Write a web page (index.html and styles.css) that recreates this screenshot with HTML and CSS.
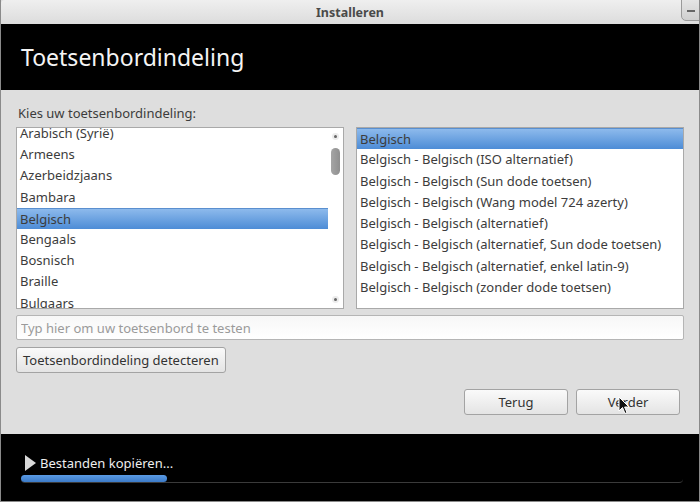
FILE: index.html
```html
<!DOCTYPE html>
<html lang="nl">
<head>
    <meta charset="UTF-8">
    <title>Installeren</title>
    <link rel="stylesheet" href="styles.css">
</head>
<body>
    <div class="window">
        <div class="titlebar">
            <span class="title">Installeren</span>
            <span class="min-btn"><span class="min-bar"></span></span>
        </div>

        <div class="header">
            <h1>Toetsenbordindeling</h1>
        </div>

        <div class="content">
            <div class="label">Kies uw toetsenbordindeling:</div>

            <div class="lists">
                <div class="list list-left">
                    <ul class="items shifted">
                        <li>Arabisch (Syrië)</li>
                        <li>Armeens</li>
                        <li>Azerbeidzjaans</li>
                        <li>Bambara</li>
                        <li class="selected">Belgisch</li>
                        <li>Bengaals</li>
                        <li>Bosnisch</li>
                        <li>Braille</li>
                        <li>Bulgaars</li>
                    </ul>
                    <div class="scrollbar">
                        <span class="arrow"></span>
                        <span class="thumb"></span>
                        <span class="arrow arrow-bottom"></span>
                    </div>
                </div>

                <div class="list list-right">
                    <ul class="items">
                        <li class="selected">Belgisch</li>
                        <li>Belgisch - Belgisch (ISO alternatief)</li>
                        <li>Belgisch - Belgisch (Sun dode toetsen)</li>
                        <li>Belgisch - Belgisch (Wang model 724 azerty)</li>
                        <li>Belgisch - Belgisch (alternatief)</li>
                        <li>Belgisch - Belgisch (alternatief, Sun dode toetsen)</li>
                        <li>Belgisch - Belgisch (alternatief, enkel latin-9)</li>
                        <li>Belgisch - Belgisch (zonder dode toetsen)</li>
                    </ul>
                </div>
            </div>

            <input class="test-input" type="text" placeholder="Typ hier om uw toetsenbord te testen">

            <div class="detect-row">
                <button class="btn btn-detect">Toetsenbordindeling detecteren</button>
            </div>

            <div class="nav-row">
                <button class="btn btn-nav">Terug</button>
                <button class="btn btn-nav">Verder</button>
                <svg class="cursor" width="12" height="19" viewBox="0 0 12 19">
                    <path d="M1 1 L1 15 L4.5 11.5 L7 17.5 L9 16.6 L6.6 11 L11 11 Z" fill="#111" stroke="#fff" stroke-width="1"/>
                </svg>
            </div>
        </div>

        <div class="footer">
            <div class="status">
                <span class="play"></span>
                <span>Bestanden kopiëren...</span>
            </div>
            <div class="progress">
                <div class="progress-fill" style="width: 22%"></div>
            </div>
        </div>
    </div>
</body>
</html>
```

FILE: styles.css
```css
/* Algemeen */
body {
    margin: 0;
    padding: 0;
    font-family: 'Noto Sans', 'DejaVu Sans', sans-serif;
    font-size: 13px;
    color: #3c3c3c;
    background-color: #dedede;
}

.window {
    width: 700px;
    height: 502px;
    display: flex;
    flex-direction: column;
    background-color: #dedede;
    box-sizing: border-box;
    border-left: 1px solid #8a8a8a;
    border-right: 1px solid #8a8a8a;
    border-bottom: 1px solid #8a8a8a;
    overflow: hidden;
}

/* Titelbalk */
.titlebar {
    height: 24px;
    flex: none;
    display: flex;
    align-items: center;
    justify-content: center;
    position: relative;
    background: linear-gradient(#efefef, #dcdcdc);
    border-top-left-radius: 4px;
}

.title {
    font-weight: bold;
    font-size: 12.5px;
    color: #4a4a4a;
}

.min-btn {
    position: absolute;
    right: -2px;
    top: -2px;
    width: 20px;
    height: 23px;
    border: 1px solid #9a9a9a;
    border-radius: 0 0 0 5px;
    background: linear-gradient(#e6e6e6, #cfcfcf);
    display: flex;
    justify-content: center;
    align-items: flex-end;
    box-sizing: border-box;
    padding-bottom: 8px;
}

.min-bar {
    width: 8px;
    height: 2px;
    background-color: #666;
}

/* Zwarte kop */
.header {
    height: 66px;
    flex: none;
    background-color: #000;
    display: flex;
    align-items: center;
}

.header h1 {
    margin: 0 0 0 20px;
    font-weight: normal;
    font-size: 23px;
    color: #f4f4f4;
}

/* Inhoud */
.content {
    flex: 1;
    padding: 15px 15px 0 15px;
    display: flex;
    flex-direction: column;
}

.label {
    margin-left: 2px;
    height: 22px;
    line-height: 17px;
}

.lists {
    display: flex;
    gap: 12px;
    height: 182px;
}

.list {
    flex: 1;
    background-color: #fff;
    border: 1px solid #a9a9a9;
    display: flex;
    overflow: hidden;
}

.items {
    list-style: none;
    margin: 0;
    padding: 0;
    flex: 1;
}

.items.shifted {
    margin-top: -5px;
}

.items li {
    height: 21.2px;
    line-height: 21.2px;
    padding-left: 3px;
    white-space: nowrap;
}

.list-right .items li {
    height: 21.3px;
    line-height: 21.3px;
}

.items li.selected {
    background: linear-gradient(#8dbaec, #4d8cd6);
    border-top: 1px solid #5a8fcf;
    box-sizing: border-box;
}

/* Schuifbalk */
.scrollbar {
    width: 15px;
    flex: none;
    display: flex;
    flex-direction: column;
    align-items: center;
}

.arrow {
    width: 3px;
    height: 3px;
    border-radius: 50%;
    background-color: #666;
    margin-top: 7px;
    box-shadow: 0 0 0 2px #ececec;
}

.arrow-bottom {
    margin-top: auto;
    margin-bottom: 7px;
}

.thumb {
    width: 9px;
    height: 27px;
    margin-top: 10px;
    border-radius: 5px;
    background: linear-gradient(90deg, #a5a5a5, #8f8f8f);
}

/* Testveld */
.test-input {
    margin-top: 6px;
    height: 25px;
    box-sizing: border-box;
    border: 1px solid #b5b5b5;
    border-radius: 2px;
    padding: 0 4px;
    font-family: inherit;
    font-size: 13px;
    background: linear-gradient(#f7f7f7, #ffffff);
}

.test-input::placeholder {
    color: #9a9a9a;
}

/* Knoppen */
.btn {
    font-family: inherit;
    font-size: 13px;
    color: #333;
    height: 26px;
    padding: 0 4px;
    border: 1px solid #a3a3a3;
    border-radius: 3px;
    background: linear-gradient(#fafafa, #e4e4e4);
}

.btn-detect {
    padding: 0 6px;
}

.detect-row {
    margin-top: 7px;
}

.nav-row {
    margin-top: 16px;
    display: flex;
    justify-content: flex-end;
    gap: 8px;
    padding-right: 4px;
    position: relative;
}

.btn-nav {
    width: 104px;
}

.cursor {
    position: absolute;
    right: 54px;
    top: 7px;
}

/* Voortgang onderaan */
.footer {
    height: 67px;
    flex: none;
    background-color: #000;
    padding: 20px 16px 0 20px;
    box-sizing: border-box;
}

.status {
    display: flex;
    align-items: center;
    gap: 4px;
    color: #eeeeee;
    font-size: 13px;
    height: 18px;
}

.play {
    width: 0;
    height: 0;
    border-top: 8px solid transparent;
    border-bottom: 8px solid transparent;
    border-left: 11px solid #d8d8d8;
    margin-left: 4px;
}

.progress {
    margin-top: 3px;
    height: 7px;
    border-bottom: 1px solid #3a3a3a;
    border-radius: 4px;
}

.progress-fill {
    height: 7px;
    border-radius: 4px;
    background: linear-gradient(#5a9ae4, #3c7bc8);
}
```
